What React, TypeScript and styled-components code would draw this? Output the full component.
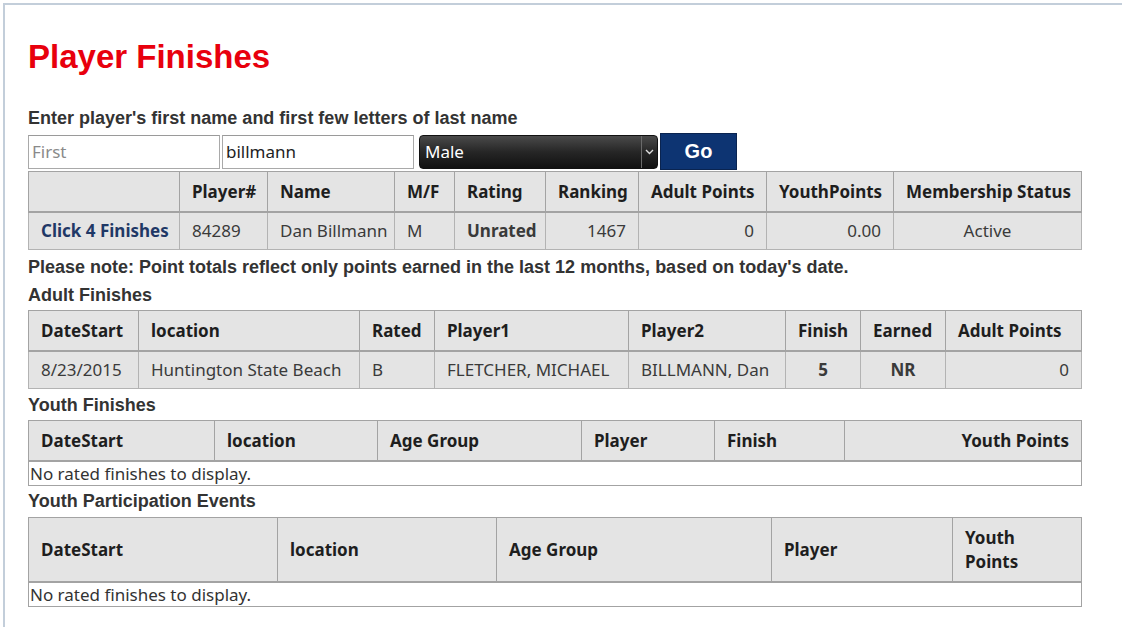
import React from 'react';
import styled, { createGlobalStyle } from 'styled-components';

const GlobalStyle = createGlobalStyle`
  html, body {
    margin: 0;
    padding: 0;
    background: #fff;
  }
  body {
    font-family: "Noto Sans", "Liberation Sans", sans-serif;
  }
`;

const Frame = styled.div`
  margin: 3px 0 0 3px;
  border-top: 2px solid #c3ceda;
  border-left: 2px solid #c3ceda;
  min-height: 624px;
  box-sizing: border-box;
  padding: 33px 0 0 23px;
  width: 1119px;
`;

const Title = styled.h1`
  margin: 0;
  font-family: "Liberation Sans", Arial, sans-serif;
  font-size: 33px;
  line-height: 37px;
  font-weight: bold;
  color: #e8000d;
`;

const Heading = styled.div<{ $top: number }>`
  margin-top: ${(p) => p.$top}px;
  font-family: "Liberation Sans", Arial, sans-serif;
  font-size: 18px;
  line-height: 20px;
  font-weight: bold;
  color: #333;
`;

const SearchRow = styled.div`
  display: flex;
  align-items: center;
  margin-top: 5px;
  height: 37px;
`;

const TextInput = styled.input`
  box-sizing: border-box;
  width: 192px;
  height: 34px;
  margin-right: 2px;
  padding: 0 3px;
  border: 1px solid #a9a9a9;
  border-top-color: #9a9a9a;
  font-family: "Noto Sans", sans-serif;
  font-size: 17px;
  color: #222;
  outline: none;
  &::placeholder {
    color: #8a8a8a;
  }
`;

const SelectBox = styled.div`
  box-sizing: border-box;
  display: flex;
  align-items: stretch;
  width: 239px;
  height: 34px;
  margin-left: 3px;
  border: 1px solid #111;
  border-radius: 4px;
  background: linear-gradient(#4a4a4a, #262626 50%, #111);
  color: #fff;
  font-size: 17px;
`;

const SelectText = styled.div`
  flex: 1;
  display: flex;
  align-items: center;
  padding-left: 5px;
`;

const SelectArrow = styled.div`
  width: 15px;
  display: flex;
  align-items: center;
  justify-content: center;
  border-left: 1px solid #6a6a6a;
`;

const GoButton = styled.button`
  box-sizing: border-box;
  width: 77px;
  height: 37px;
  margin-left: 2px;
  background: #0d3472;
  border: 1px solid #0a2450;
  color: #fff;
  font-family: "Liberation Sans", Arial, sans-serif;
  font-weight: bold;
  font-size: 20px;
  padding: 0;
`;

const Table = styled.table<{ $top?: number }>`
  border-collapse: collapse;
  table-layout: fixed;
  width: 1053px;
  margin-top: ${(p) => p.$top ?? 0}px;
  border: 1px solid #a3a3a3;
  font-size: 17px;
  color: #3a3a3a;
`;

const Th = styled.th<{ $align?: string }>`
  background: #e4e4e4;
  border: 1px solid #a3a3a3;
  border-bottom: 2px solid #a3a3a3;
  padding: 8px 12px 7px;
  line-height: 24px;
  text-align: ${(p) => p.$align ?? 'left'};
  font-weight: 700;
  color: #1e1e1e;
  white-space: nowrap;
`;

const Td = styled.td<{ $align?: string; $bold?: boolean }>`
  background: #e4e4e4;
  border: 1px solid #b3b3b3;
  padding: 6px 12px;
  line-height: 24px;
  text-align: ${(p) => p.$align ?? 'left'};
  font-weight: ${(p) => (p.$bold ? 700 : 400)};
  white-space: nowrap;
`;

const EmptyCell = styled.td`
  background: #fff;
  padding: 0 1px;
  line-height: 23px;
  color: #333;
`;

const FinishLink = styled.a`
  color: #1f3866;
  font-weight: 700;
  text-decoration: none;
`;

const Chevron = () => (
  <svg width="9" height="6" viewBox="0 0 9 6">
    <path d="M1 1l3.5 3.5L8 1" stroke="#ddd" strokeWidth="1.4" fill="none" />
  </svg>
);

const Cols = ({ widths }: { widths: number[] }) => (
  <colgroup>
    {widths.map((w, i) => (
      <col key={i} style={{ width: w }} />
    ))}
  </colgroup>
);

const App = () => (
  <>
    <GlobalStyle />
    <Frame>
      <Title>Player Finishes</Title>
      <Heading $top={33}>Enter player's first name and first few letters of last name</Heading>
      <SearchRow>
        <TextInput placeholder="First" />
        <TextInput defaultValue="billmann" />
        <SelectBox>
          <SelectText>Male</SelectText>
          <SelectArrow>
            <Chevron />
          </SelectArrow>
        </SelectBox>
        <GoButton>Go</GoButton>
      </SearchRow>

      <Table $top={1}>
        <Cols widths={[151, 88, 127, 60, 91, 93, 128, 127, 188]} />
        <thead>
          <tr>
            <Th></Th>
            <Th>Player#</Th>
            <Th>Name</Th>
            <Th>M/F</Th>
            <Th>Rating</Th>
            <Th>Ranking</Th>
            <Th>Adult Points</Th>
            <Th>YouthPoints</Th>
            <Th>Membership Status</Th>
          </tr>
        </thead>
        <tbody>
          <tr>
            <Td>
              <FinishLink href="#">Click 4 Finishes</FinishLink>
            </Td>
            <Td>84289</Td>
            <Td>Dan Billmann</Td>
            <Td>M</Td>
            <Td $bold>Unrated</Td>
            <Td $align="right">1467</Td>
            <Td $align="right">0</Td>
            <Td $align="right">0.00</Td>
            <Td $align="center">Active</Td>
          </tr>
        </tbody>
      </Table>

      <Heading $top={7}>Please note: Point totals reflect only points earned in the last 12 months, based on today's date.</Heading>
      <Heading $top={8}>Adult Finishes</Heading>

      <Table $top={5}>
        <Cols widths={[110, 221, 75, 194, 157, 75, 85, 136]} />
        <thead>
          <tr>
            <Th>DateStart</Th>
            <Th>location</Th>
            <Th>Rated</Th>
            <Th>Player1</Th>
            <Th>Player2</Th>
            <Th>Finish</Th>
            <Th>Earned</Th>
            <Th>Adult Points</Th>
          </tr>
        </thead>
        <tbody>
          <tr>
            <Td>8/23/2015</Td>
            <Td>Huntington State Beach</Td>
            <Td>B</Td>
            <Td>FLETCHER, MICHAEL</Td>
            <Td>BILLMANN, Dan</Td>
            <Td $align="center" $bold>5</Td>
            <Td $align="center" $bold>NR</Td>
            <Td $align="right">0</Td>
          </tr>
        </tbody>
      </Table>

      <Heading $top={6}>Youth Finishes</Heading>
      <Table $top={5}>
        <Cols widths={[186, 163, 204, 133, 130, 237]} />
        <thead>
          <tr>
            <Th>DateStart</Th>
            <Th>location</Th>
            <Th>Age Group</Th>
            <Th>Player</Th>
            <Th>Finish</Th>
            <Th $align="right">Youth Points</Th>
          </tr>
        </thead>
        <tbody>
          <tr>
            <EmptyCell colSpan={6}>No rated finishes to display.</EmptyCell>
          </tr>
        </tbody>
      </Table>

      <Heading $top={5}>Youth Participation Events</Heading>
      <Table $top={6}>
        <Cols widths={[249, 219, 275, 181, 129]} />
        <thead>
          <tr>
            <Th>DateStart</Th>
            <Th>location</Th>
            <Th>Age Group</Th>
            <Th>Player</Th>
            <Th>
              Youth
              <br />
              Points
            </Th>
          </tr>
        </thead>
        <tbody>
          <tr>
            <EmptyCell colSpan={5}>No rated finishes to display.</EmptyCell>
          </tr>
        </tbody>
      </Table>
    </Frame>
  </>
);

export default App;
